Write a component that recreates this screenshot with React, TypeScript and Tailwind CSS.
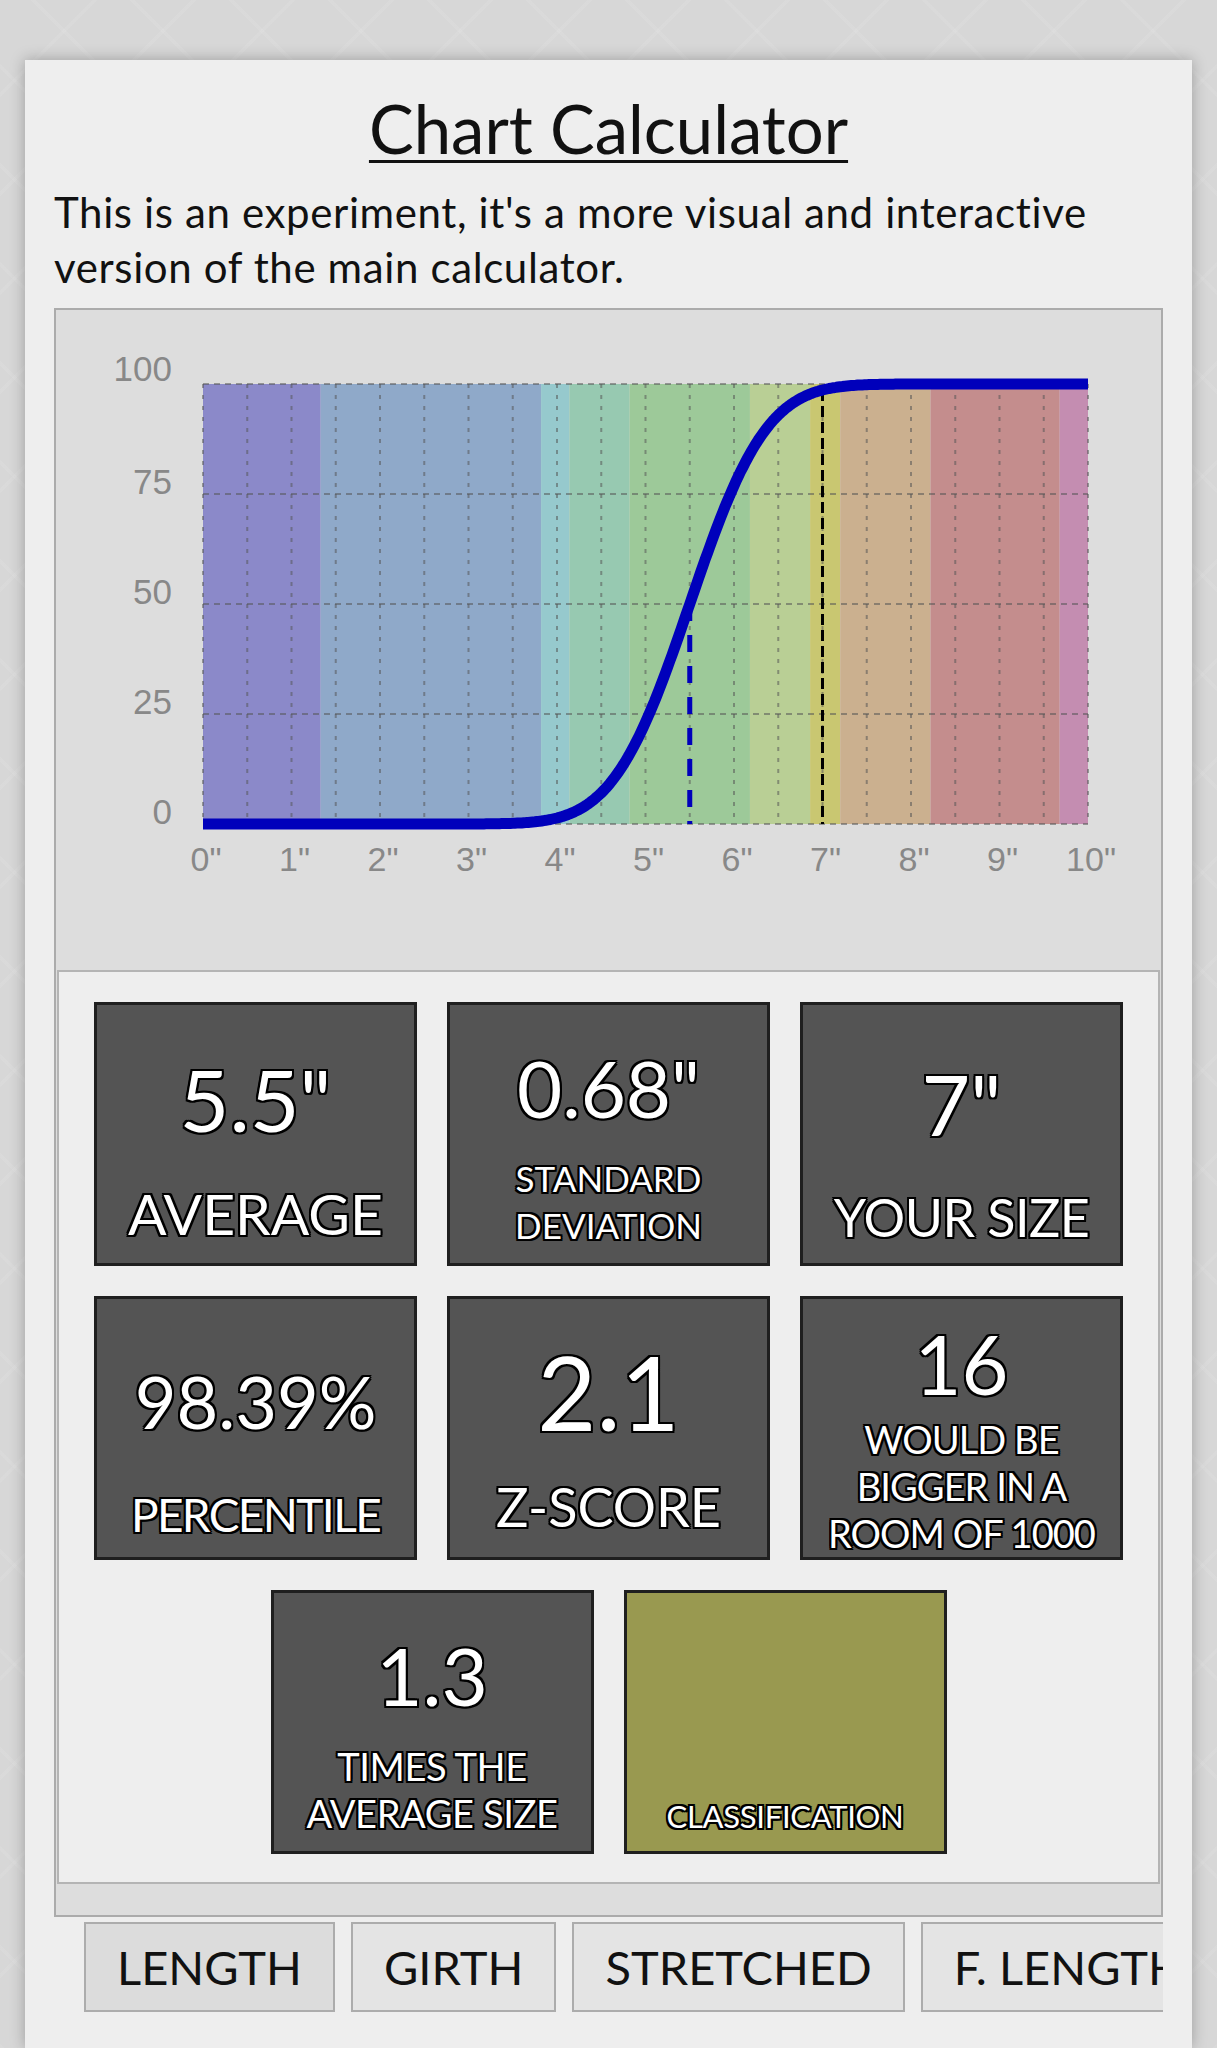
import React from "react";

const MEAN = 5.5;
const SD = 0.68;
const YOURS = 7;

// plot area inside the chart svg
const PX0 = 147;
const PX1 = 1032;
const PY0 = 74;
const PY1 = 514;

const xAt = (inch: number) => PX0 + ((PX1 - PX0) * inch) / 10;
const yAt = (pct: number) => PY1 - ((PY1 - PY0) * pct) / 100;

const erf = (v: number) => {
  const s = Math.sign(v);
  const a = Math.abs(v);
  const t = 1 / (1 + 0.3275911 * a);
  const y =
    1 -
    ((((1.061405429 * t - 1.453152027) * t + 1.421413741) * t - 0.284496736) * t + 0.254829592) *
      t *
      Math.exp(-a * a);
  return s * y;
};

const cdf = (v: number) => 0.5 * (1 + erf((v - MEAN) / (SD * Math.SQRT2)));

const bands = [
  { from: 0, to: 1.33, color: "#8b89c9" },
  { from: 1.33, to: 3.82, color: "#8fa9c9" },
  { from: 3.82, to: 4.14, color: "#96c9cd" },
  { from: 4.14, to: 4.82, color: "#97c9b1" },
  { from: 4.82, to: 6.18, color: "#9dc999" },
  { from: 6.18, to: 6.86, color: "#b9cf95" },
  { from: 6.86, to: 7.2, color: "#c9c771" },
  { from: 7.2, to: 8.22, color: "#cbb08f" },
  { from: 8.22, to: 9.68, color: "#c48d8d" },
  { from: 9.68, to: 10, color: "#c48db1" },
];

const outline =
  "[text-shadow:2px_2px_0_#000,-2px_-2px_0_#000,2px_-2px_0_#000,-2px_2px_0_#000,0_2px_0_#000,0_-2px_0_#000,2px_0_0_#000,-2px_0_0_#000]";

interface IStat {
  value: string;
  valueClass: string;
  label: string[];
  labelClass: string;
  bg: string;
}

const stats: IStat[] = [
  { value: '5.5"', valueClass: "text-[86px] pt-[9px]", label: ["AVERAGE"], labelClass: "text-[57px] leading-[60px] pb-[20px]", bg: "bg-[#545454]" },
  { value: '0.68"', valueClass: "text-[78px] pt-[15px]", label: ["STANDARD", "DEVIATION"], labelClass: "text-[35px] leading-[47px] pb-[14px]", bg: "bg-[#545454]" },
  { value: '7"', valueClass: "text-[84px] pt-[13px]", label: ["YOUR SIZE"], labelClass: "text-[52px] leading-[56px] pb-[18px] tracking-[-0.01em]", bg: "bg-[#545454]" },
  { value: "98.39%", valueClass: "text-[72px] pt-[13px]", label: ["PERCENTILE"], labelClass: "text-[46px] leading-[50px] pb-[17px] tracking-[-0.035em]", bg: "bg-[#545454]" },
  { value: "2.1", valueClass: "text-[102px] pt-[7px]", label: ["Z-SCORE"], labelClass: "text-[54px] leading-[58px] pb-[21px]", bg: "bg-[#545454]" },
  { value: "16", valueClass: "text-[81px] pt-[11px]", label: ["WOULD BE", "BIGGER IN A", "ROOM OF 1000"], labelClass: "text-[38px] leading-[47px] pb-0 tracking-[-0.025em]", bg: "bg-[#545454]" },
  { value: "1.3", valueClass: "text-[80px] pt-[13px]", label: ["TIMES THE", "AVERAGE SIZE"], labelClass: "text-[38px] leading-[47px] pb-[14px] tracking-[-0.01em]", bg: "bg-[#545454]" },
  { value: "", valueClass: "text-[80px]", label: ["CLASSIFICATION"], labelClass: "text-[31px] leading-[40px] pb-[15px] tracking-[-0.01em]", bg: "bg-[#999950]" },
];

const tabs = ["LENGTH", "GIRTH", "STRETCHED", "F. LENGTH"];

const Chart: React.FC = () => {
  const points: string[] = [];
  for (let i = 0; i <= 400; i++) {
    const v = i * 0.025;
    points.push(`${xAt(v).toFixed(1)},${yAt(cdf(v) * 100).toFixed(1)}`);
  }
  const halfInches = Array.from({ length: 21 }, (_, i) => i * 0.5);

  return (
    <svg viewBox="0 0 1105 660" className="block h-[660px] w-full">
      {bands.map((b) => (
        <rect key={b.from} x={xAt(b.from)} y={PY0} width={xAt(b.to) - xAt(b.from)} height={PY1 - PY0} fill={b.color} />
      ))}
      {halfInches.map((h) => (
        <line
          key={h}
          x1={xAt(h)}
          x2={xAt(h)}
          y1={PY0}
          y2={PY1}
          stroke="#555"
          strokeOpacity={0.55}
          strokeWidth={2}
          strokeDasharray="4 7"
        />
      ))}
      {[0, 25, 50, 75, 100].map((p) => (
        <line
          key={p}
          x1={PX0}
          x2={PX1}
          y1={yAt(p)}
          y2={yAt(p)}
          stroke="#555"
          strokeOpacity={0.55}
          strokeWidth={2}
          strokeDasharray="6 5"
        />
      ))}
      {[0, 25, 50, 75, 100].map((p) => (
        <text
          key={p}
          x={116}
          y={yAt(p) + (p === 100 ? -3 : 0)}
          textAnchor="end"
          fontSize={35}
          fill="#888888"
          fontFamily="'Liberation Sans', Arial, sans-serif"
        >
          {p}
        </text>
      ))}
      {Array.from({ length: 11 }, (_, i) => i).map((i) => (
        <text
          key={i}
          x={xAt(i) + 3}
          y={561}
          textAnchor="middle"
          fontSize={34}
          fill="#888888"
          fontFamily="'Liberation Sans', Arial, sans-serif"
        >
          {i}"
        </text>
      ))}
      <line
        x1={xAt(MEAN)}
        x2={xAt(MEAN)}
        y1={yAt(50)}
        y2={PY1}
        stroke="#0000bb"
        strokeWidth={5}
        strokeDasharray="17 14"
      />
      <line
        x1={xAt(YOURS)}
        x2={xAt(YOURS)}
        y1={yAt(cdf(YOURS) * 100)}
        y2={PY1}
        stroke="#000"
        strokeWidth={3}
        strokeDasharray="11 5"
      />
      <polyline points={points.join(" ")} fill="none" stroke="#0000bb" strokeWidth={11} strokeLinejoin="round" />
    </svg>
  );
};

const StatTile: React.FC<{ stat: IStat }> = ({ stat }) => (
  <div className={`flex h-[264px] w-[323px] flex-col border-[3px] border-[#1f1f1f] text-white ${stat.bg} ${outline}`}>
    <div className={`flex flex-1 items-center justify-center leading-none ${stat.valueClass}`}>{stat.value}</div>
    <div className={`text-center ${stat.labelClass}`}>
      {stat.label.map((l) => (
        <div key={l}>{l}</div>
      ))}
    </div>
  </div>
);

const App: React.FC = () => {
  return (
    <div className="min-h-screen bg-[#d7d7d7] bg-[image:repeating-linear-gradient(45deg,rgba(255,255,255,0.07)_0px,rgba(255,255,255,0.07)_3px,transparent_3px,transparent_70px),repeating-linear-gradient(-45deg,rgba(255,255,255,0.07)_0px,rgba(255,255,255,0.07)_3px,transparent_3px,transparent_70px)] px-[25px] pt-[60px] [font-family:Lato,'Noto_Sans',sans-serif]">
      <div className="min-h-[1988px] bg-[#eeeeee] px-[29px] shadow-[0_0_14px_rgba(0,0,0,0.28)]">
        <h1 className="pt-[32px] text-center text-[67px] font-normal leading-[72px] text-[#111] underline decoration-[3px] underline-offset-[6px]">
          Chart Calculator
        </h1>
        <p className="mt-[21px] text-[42px] leading-[55px] tracking-[0.015em] text-[#111]">
          This is an experiment, it's a more visual and interactive version of the main calculator.
        </p>

        <div className="mt-[13px] border-2 border-[#ababab] bg-[#dddddd]">
          <Chart />
          <div className="mx-px flex flex-wrap justify-center gap-[30px] border-2 border-[#b4b4b4] bg-[#eeeeee] pb-[28px] pt-[30px]">
            {stats.map((s) => (
              <StatTile key={s.label.join(" ")} stat={s} />
            ))}
          </div>
          <div className="h-[31px]" />
        </div>

        <div className="mt-[5px] flex gap-[16px] overflow-hidden pl-[30px]">
          {tabs.map((t, i) => (
            <div
              key={t}
              className={`flex h-[90px] shrink-0 items-center border-2 border-[#acacac] px-[31px] text-[47px] text-[#111] ${
                i === 0 ? "bg-[#dcdcdc]" : "bg-[#e4e4e4]"
              }`}
            >
              {t}
            </div>
          ))}
        </div>
      </div>
    </div>
  );
};

export default App;
